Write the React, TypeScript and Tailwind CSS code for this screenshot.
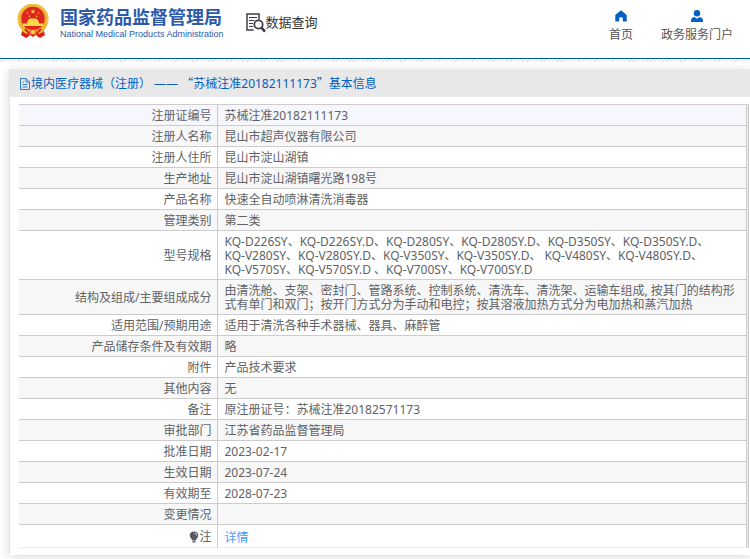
import React from 'react';
import clsx from 'clsx';

interface InfoRow {
  label: string;
  value: string;
}

const rows: InfoRow[] = [
  { label: '注册证编号', value: '苏械注准20182111173' },
  { label: '注册人名称', value: '昆山市超声仪器有限公司' },
  { label: '注册人住所', value: '昆山市淀山湖镇' },
  { label: '生产地址', value: '昆山市淀山湖镇曙光路198号' },
  { label: '产品名称', value: '快速全自动喷淋清洗消毒器' },
  { label: '管理类别', value: '第二类' },
  {
    label: '型号规格',
    value:
      'KQ-D226SY、KQ-D226SY.D、KQ-D280SY、KQ-D280SY.D、KQ-D350SY、KQ-D350SY.D、\nKQ-V280SY、KQ-V280SY.D、KQ-V350SY、KQ-V350SY.D、 KQ-V480SY、KQ-V480SY.D、\nKQ-V570SY、KQ-V570SY.D 、KQ-V700SY、KQ-V700SY.D',
  },
  {
    label: '结构及组成/主要组成成分',
    value:
      '由清洗舱、支架、密封门、管路系统、控制系统、清洗车、清洗架、运输车组成, 按其门的结构形式有单门和双门；按开门方式分为手动和电控；按其溶液加热方式分为电加热和蒸汽加热',
  },
  { label: '适用范围/预期用途', value: '适用于清洗各种手术器械、器具、麻醉管' },
  { label: '产品储存条件及有效期', value: '略' },
  { label: '附件', value: '产品技术要求' },
  { label: '其他内容', value: '无' },
  { label: '备注', value: '原注册证号：苏械注准20182571173' },
  { label: '审批部门', value: '江苏省药品监督管理局' },
  { label: '批准日期', value: '2023-02-17' },
  { label: '生效日期', value: '2023-07-24' },
  { label: '有效期至', value: '2028-07-23' },
  { label: '变更情况', value: '' },
];

const STAR = 'M0 -1 L.23 -.31 L.95 -.31 L.36 .12 L.59 .81 L0 .38 L-.59 .81 L-.36 .12 L-.95 -.31 L-.23 -.31Z';

const Emblem: React.FC = () => (
  <svg viewBox="0 0 32 35" className="h-[35px] w-8 shrink-0" aria-hidden="true">
    <path d="M6 24 L4 31 L9 34 L13 31 L16 33 L19 31 L23 34 L28 31 L26 24Z" fill="#d9201c" />
    <circle cx="16" cy="15" r="15.5" fill="#edb52f" />
    <circle cx="16" cy="15" r="14.5" fill="none" stroke="#f8d45c" strokeWidth="1" strokeDasharray="2 1" />
    <circle cx="16" cy="14.5" r="11.7" fill="#df2720" />
    <g fill="#ffd84a">
      <path d={STAR} transform="translate(16 7.6) scale(2.6)" />
      <path d={STAR} transform="translate(10.5 9) scale(1.2)" />
      <path d={STAR} transform="translate(21.5 9) scale(1.2)" />
      <path d={STAR} transform="translate(12.3 12.3) scale(1.2)" />
      <path d={STAR} transform="translate(19.7 12.3) scale(1.2)" />
      <path d="M11 16 L13 14.5 H19 L21 16 V17.5 H22 V19.5 H26 V22 H6 V19.5 H10 V17.5 H11Z" />
    </g>
    <path d="M4 24 Q9 24 12 27 Q14 25 16 25 Q18 25 20 27 Q23 24 28 24 L26 28 L22 30 L19 28 L16 31 L13 28 L10 30 L6 28Z" fill="#f2b92e" />
    <path d="M8 25 L12 29 L10 33 M24 25 L20 29 L22 33" fill="none" stroke="#d9201c" strokeWidth="1.8" />
    <circle cx="16" cy="28" r="2.6" fill="#f7cf4a" stroke="#d9201c" strokeWidth=".7" />
  </svg>
);

const QueryIcon: React.FC = () => (
  <svg viewBox="0 0 20 20" className="h-5 w-5" fill="none" stroke="#3f3d4d" aria-hidden="true">
    <path d="M7.5 17 H1 V1 H13 V6.5" strokeWidth="1.5" />
    <path d="M3 4.5 H11 M3 7.5 H8.5 M3 10.5 H7 M3 13.5 H7" strokeWidth="1.2" />
    <circle cx="12.5" cy="11.5" r="4.2" strokeWidth="1.8" />
    <path d="M15.5 14.7 L19 18.7" strokeWidth="2.6" />
  </svg>
);

const HomeIcon: React.FC = () => (
  <svg viewBox="0 0 12 12" className="h-3 w-3" fill="#0060c4" aria-hidden="true">
    <path d="M6 .3 L11.7 5 V11.5 H7.8 V7.5 H4.2 V11.5 H.3 V5Z" />
  </svg>
);

const UserIcon: React.FC = () => (
  <svg viewBox="0 0 12 12" className="h-3 w-3" fill="#0060c4" aria-hidden="true">
    <circle cx="6" cy="3.2" r="3.2" />
    <path d="M0 12 V10.5 Q0 7.8 3.5 7 L6 8.8 L8.5 7 Q12 7.8 12 10.5 V12Z" />
  </svg>
);

const DocIcon: React.FC = () => (
  <svg viewBox="0 0 12 12" className="h-3 w-3" fill="none" stroke="currentColor" aria-hidden="true">
    <path d="M1.5 .5 H7 L10.5 4 V11.5 H1.5Z M7 .5 V4 H10.5 M3.5 6.5 H8.5 M3.5 9 H8.5 M3.5 4 H5" strokeWidth=".8" />
  </svg>
);

const BulbIcon: React.FC = () => (
  <svg viewBox="0 0 10 12" className="h-3 w-2.5" aria-hidden="true">
    <path d="M5 .5 C2.2 .5 .7 2.5 .7 4.6 C.7 7 3 8 3.2 9.5 H6.8 C7 8 9.3 7 9.3 4.6 C9.3 2.5 7.8 .5 5 .5Z M3.6 10 H6.4 V11.5 H3.6Z" fill="#56585c" />
    <path d="M5.5 2 Q7.6 2.3 7.8 4.4" fill="none" stroke="#fff" strokeWidth=".8" />
  </svg>
);

const Header: React.FC = () => (
  <header className="flex h-[59px] items-start justify-between border-b border-[#0060b8] bg-white px-[17px]">
    <div className="flex">
      <a href="#" className="flex gap-[11px] pt-1">
        <Emblem />
        <div className="pt-1 whitespace-nowrap text-[#2c5aa8]">
          <div className="text-lg leading-[18px] font-bold">国家药品监督管理局</div>
          <div className="mt-[3px] font-['Liberation_Sans',sans-serif] text-[9px] leading-[10px]">
            National Medical Products Administration
          </div>
        </div>
      </a>
      <a href="#" className="ml-[22px] flex h-[45px] items-center text-[13px] whitespace-nowrap text-[#333]">
        <QueryIcon />
        数据查询
      </a>
    </div>
    <nav className="flex gap-7 pt-[10px] text-xs whitespace-nowrap text-[#555]">
      <a href="#" className="flex flex-col items-center gap-[5px]">
        <HomeIcon />
        首页
      </a>
      <a href="#" className="flex flex-col items-center gap-[5px]">
        <UserIcon />
        政务服务门户
      </a>
    </nav>
  </header>
);

const labelClass = 'w-[198px] border-r border-[#ccc] px-[5px] pt-[2px] text-right font-normal whitespace-nowrap';
const valueClass = 'border-r border-[#ccc] px-[7px] whitespace-pre-line';

export default function App() {
  return (
    <div className="bg-white pb-1 font-['Noto_Sans','Noto_Sans_CJK_SC',sans-serif] text-xs text-[#606266]">
      <Header />
      <div className="h-[3px] bg-[repeating-linear-gradient(135deg,#fff_0_2px,#e4e4e4_2px_3px)]" />
      <main className="mt-[7px] ml-[9px] border-l border-[#e4e4e4] pb-[7px] shadow-[0_2px_10px_rgba(0,0,0,0.15)]">
        <h1 className="flex h-7 items-center border-b border-[#e6ebf5] bg-[#e8e8e8] pt-[2px] pl-[9px] text-[#0060c4]">
          <DocIcon />
          <span>
            境内医疗器械（注册） —— <span className="font-['Noto_Sans_CJK_SC',sans-serif]">“</span>
            苏械注准20182111173
            <span className="font-['Noto_Sans_CJK_SC',sans-serif]">”</span>基本信息
          </span>
        </h1>
        <div className="mt-[7px] mr-px ml-[9px] border-r border-[#ccc] bg-[#eaecf4] pr-px">
          <table className="w-full border-collapse border-t border-[#ccc] bg-white leading-[14px]">
            <tbody>
              {rows.map((row, index) => (
                <tr
                  key={row.label}
                  className={clsx(
                    'h-[21px] border-b border-[#ccc]',
                    index === 0 && 'bg-[#f5f7fc]',
                    index % 2 === 1 && 'bg-[#f7f7f7]'
                  )}
                >
                  <th scope="row" className={labelClass}>{row.label}</th>
                  <td className={clsx(valueClass, row.value.length > 60 ? 'pt-1 pb-[2px]' : 'pt-[2px]')}>
                    {row.value}
                  </td>
                </tr>
              ))}
              <tr className="h-[23px] border-b border-[#ebeef5]">
                <th scope="row" className={labelClass}>
                  <span className="flex items-center justify-end">
                    <BulbIcon />注
                  </span>
                </th>
                <td className={clsx(valueClass, 'pt-[3px]')}>
                  <a href="#" className="text-[#409eff]">详情</a>
                </td>
              </tr>
            </tbody>
          </table>
        </div>
      </main>
    </div>
  );
}
